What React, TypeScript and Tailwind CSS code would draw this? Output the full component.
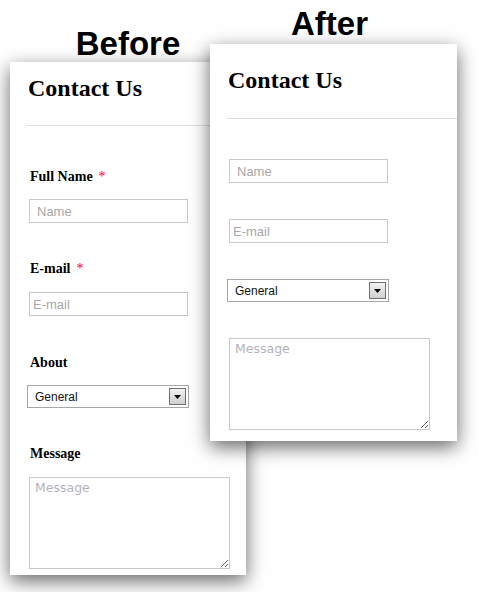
import React from "react";

const serif = { fontFamily: '"Liberation Serif", "Times New Roman", serif' };
const sans = { fontFamily: '"Liberation Sans", Arial, sans-serif' };

function Field({ placeholder, pad }: { placeholder: string; pad: string }) {
  return (
    <input
      readOnly
      placeholder={placeholder}
      style={sans}
      className={`block w-[159px] h-[24px] border border-[#c9c9c9] bg-white text-[13px] outline-none placeholder:text-[#a8a8a8] ${pad}`}
    />
  );
}

function SelectBox({ h }: { h: string }) {
  return (
    <div
      style={sans}
      className={`flex w-[162px] ${h} items-center justify-between border border-[#a6a6a6] bg-white pl-[7px] pr-[2px]`}
    >
      <span className="text-[12px] leading-none text-[#111]">General</span>
      <span className="flex h-[17px] w-[17px] items-center justify-center border border-[#707070] bg-gradient-to-b from-[#f2f2f2] to-[#cfcfcf]">
        <svg width="7" height="4" viewBox="0 0 7 4">
          <path d="M0 0h7L3.5 4z" fill="#000" />
        </svg>
      </span>
    </div>
  );
}

function MessageBox() {
  return (
    <textarea
      readOnly
      placeholder="Message"
      style={{ fontFamily: '"DejaVu Sans", Verdana, sans-serif' }}
      className="block w-[201px] h-[92px] resize border border-[#c9c9c9] bg-white px-[5px] py-[2px] text-[12.5px] leading-[16px] outline-none placeholder:text-[#b3b3c0]"
    />
  );
}

function Label({ text, req }: { text: string; req?: boolean }) {
  return (
    <div style={serif} className="ml-[20px] text-[14px] font-bold leading-[16px] text-black">
      {text}
      {req && <span className="ml-[6px] font-normal text-[#ff0000]">*</span>}
    </div>
  );
}

export default function App() {
  return (
    <div className="relative h-[592px] w-[479px] overflow-hidden bg-white">
      {/* Before */}
      <div
        style={sans}
        className="absolute left-[10px] top-[27px] w-[236px] text-center text-[33px] font-bold leading-[33px] text-black"
      >
        Before
      </div>
      <div className="absolute left-[10px] top-[62px] h-[513px] w-[236px] bg-white shadow-[0_6px_18px_rgba(0,0,0,0.6)]">
        <div style={serif} className="ml-[18px] mt-[14px] text-[24px] font-bold leading-[24px] text-black">
          Contact Us
        </div>
        <div className="ml-[17px] mt-[25px] h-px bg-[#dddddd]" />
        <div className="mt-[43px]">
          <Label text="Full Name" req />
        </div>
        <div className="ml-[19px] mt-[14px]">
          <Field placeholder="Name" pad="pl-[7px]" />
        </div>
        <div className="mt-[38px]">
          <Label text="E-mail" req />
        </div>
        <div className="ml-[19px] mt-[15px]">
          <Field placeholder="E-mail" pad="pl-[3px]" />
        </div>
        <div className="mt-[39px]">
          <Label text="About" />
        </div>
        <div className="ml-[17px] mt-[14px]">
          <SelectBox h="h-[23px]" />
        </div>
        <div className="mt-[38px]">
          <Label text="Message" />
        </div>
        <div className="ml-[19px] mt-[15px]">
          <MessageBox />
        </div>
      </div>

      {/* After */}
      <div
        style={sans}
        className="absolute left-[210px] top-[7px] w-[239px] text-center text-[33px] font-bold leading-[33px] text-black"
      >
        After
      </div>
      <div className="absolute left-[210px] top-[44px] h-[397px] w-[247px] bg-white shadow-[0_6px_18px_rgba(0,0,0,0.6)]">
        <div style={serif} className="ml-[18px] mt-[24px] text-[24px] font-bold leading-[24px] text-black">
          Contact Us
        </div>
        <div className="ml-[17px] mt-[26px] h-px bg-[#dddddd]" />
        <div className="ml-[19px] mt-[40px]">
          <Field placeholder="Name" pad="pl-[7px]" />
        </div>
        <div className="ml-[19px] mt-[36px]">
          <Field placeholder="E-mail" pad="pl-[3px]" />
        </div>
        <div className="ml-[17px] mt-[36px]">
          <SelectBox h="h-[23px]" />
        </div>
        <div className="ml-[19px] mt-[36px]">
          <MessageBox />
        </div>
      </div>
    </div>
  );
}
